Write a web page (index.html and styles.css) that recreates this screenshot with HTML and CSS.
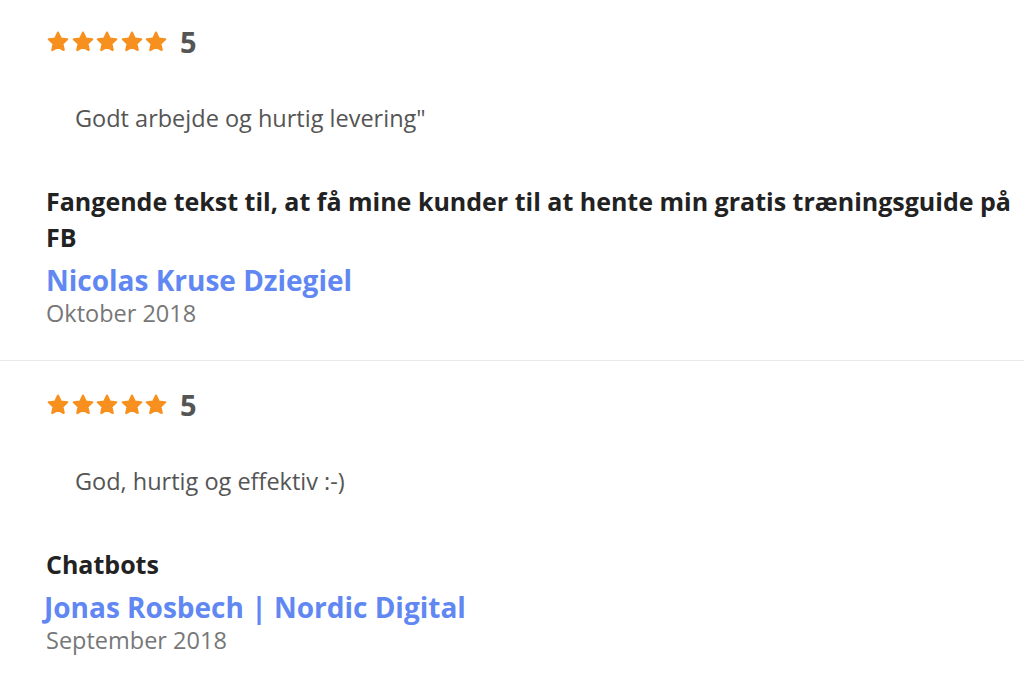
FILE: index.html
```html
<!DOCTYPE html>
<html lang="da">
<head>
    <meta charset="UTF-8">
    <meta name="viewport" content="width=device-width, initial-scale=1.0">
    <title>Anmeldelser</title>
    <link rel="stylesheet" href="styles.css">
</head>
<body>
    <svg width="0" height="0" class="defs">
        <defs>
            <path id="star" d="M12 2.6l2.75 5.9 6.45.75-4.8 4.4 1.3 6.35L12 16.8 6.3 20l1.3-6.35-4.8-4.4 6.45-.75z"/>
        </defs>
    </svg>

    <div class="review">
        <div class="rating">
            <span class="stars">
                <svg viewBox="0 0 24 24"><use href="#star"/></svg>
                <svg viewBox="0 0 24 24"><use href="#star"/></svg>
                <svg viewBox="0 0 24 24"><use href="#star"/></svg>
                <svg viewBox="0 0 24 24"><use href="#star"/></svg>
                <svg viewBox="0 0 24 24"><use href="#star"/></svg>
            </span>
            <span class="score">5</span>
        </div>
        <p class="quote">Godt arbejde og hurtig levering"</p>
        <h3 class="title">Fangende tekst til, at få mine kunder til at hente min gratis træningsguide på FB</h3>
        <a class="author" href="#">Nicolas Kruse Dziegiel</a>
        <div class="date">Oktober 2018</div>
    </div>

    <div class="review">
        <div class="rating">
            <span class="stars">
                <svg viewBox="0 0 24 24"><use href="#star"/></svg>
                <svg viewBox="0 0 24 24"><use href="#star"/></svg>
                <svg viewBox="0 0 24 24"><use href="#star"/></svg>
                <svg viewBox="0 0 24 24"><use href="#star"/></svg>
                <svg viewBox="0 0 24 24"><use href="#star"/></svg>
            </span>
            <span class="score">5</span>
        </div>
        <p class="quote">God, hurtig og effektiv :-)</p>
        <h3 class="title">Chatbots</h3>
        <a class="author second" href="#">Jonas Rosbech | Nordic Digital</a>
        <div class="date">September 2018</div>
    </div>
</body>
</html>
```

FILE: styles.css
```css
body {
    font-family: 'Open Sans', sans-serif;
    background-color: #ffffff;
    margin: 0;
    padding: 0;
}

.defs {
    position: absolute;
}

.review {
    padding: 26px 12px 31px 46px;
    border-bottom: 1px solid #e9e9e9;
}

.review + .review {
    padding-top: 28px;
    border-bottom: none;
}

.rating {
    display: flex;
    align-items: center;
    height: 32px;
}

.stars {
    display: flex;
    gap: 0.5px;
}

.stars svg {
    width: 24px;
    height: 24px;
    fill: #f7901e;
    stroke: #f7901e;
    stroke-width: 2.2;
    stroke-linejoin: round;
}

.score {
    font-size: 29px;
    font-weight: 700;
    color: #555555;
    margin-left: 12px;
    line-height: 32px;
}

.quote {
    font-size: 23.5px;
    line-height: 30px;
    color: #555555;
    margin: 45px 0 0 29px;
}

.title {
    font-size: 25px;
    line-height: 36px;
    font-weight: 700;
    color: #222222;
    margin: 50px 0 0 0;
}

.author {
    display: block;
    font-size: 28px;
    line-height: 34px;
    font-weight: 700;
    color: #6187f3;
    text-decoration: none;
    margin-top: 8px;
}

.author.second {
    margin-left: -2px;
}

.date {
    font-size: 23.5px;
    line-height: 32px;
    color: #777777;
}
```
